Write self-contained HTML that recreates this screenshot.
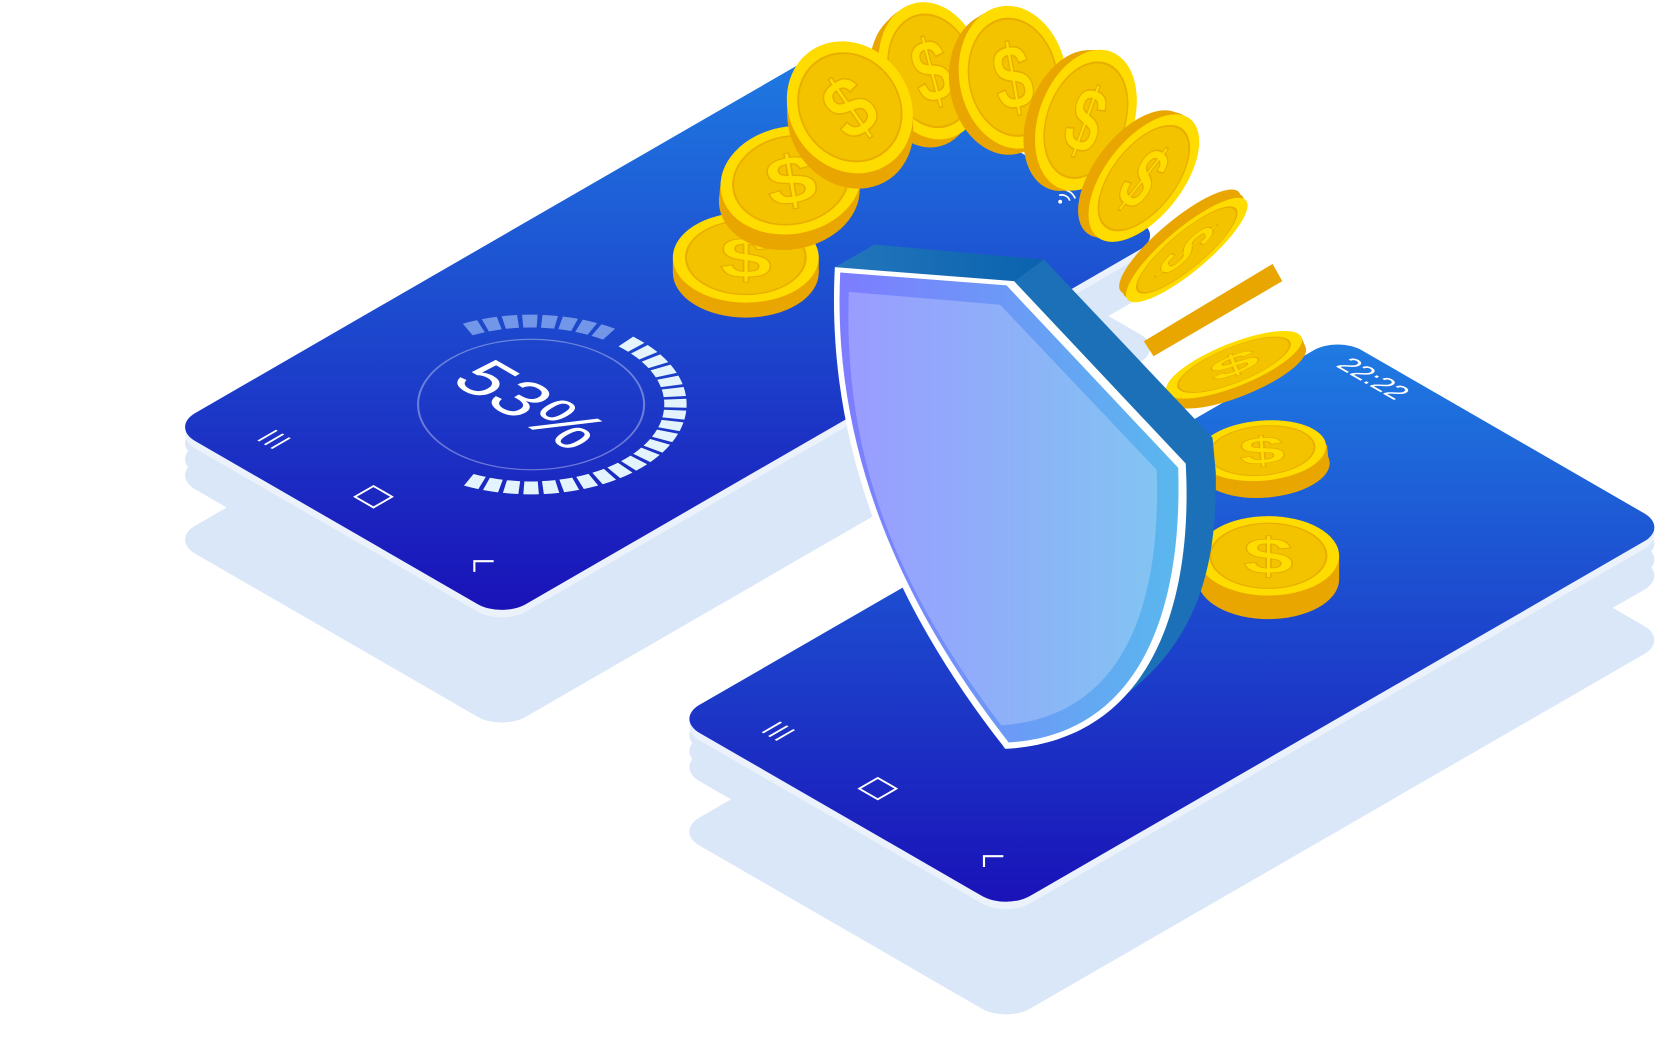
<!DOCTYPE html>
<html><head><meta charset="utf-8"><style>
html,body{margin:0;padding:0;background:#fff;width:1674px;height:1059px;overflow:hidden}
svg{display:block}
</style></head><body>
<svg width="1674" height="1059" viewBox="0 0 1560 987" xmlns="http://www.w3.org/2000/svg" font-family="Liberation Sans, sans-serif">
<defs>
<rect id="pr" x="-12" y="-701" width="356" height="713" rx="26"/>
<linearGradient id="scr" gradientUnits="userSpaceOnUse" x1="-350" y1="-350" x2="172" y2="172">
<stop offset="0" stop-color="#1f7be2"/><stop offset="1" stop-color="#1a12b8"/>
</linearGradient>
<linearGradient id="shf" x1="0" y1="0" x2="1" y2="0">
<stop offset="0" stop-color="#7d7cff"/><stop offset="1" stop-color="#5ab8ee"/>
</linearGradient>
<linearGradient id="shi" x1="0" y1="0" x2="1" y2="0">
<stop offset="0" stop-color="#9a9cff"/><stop offset="1" stop-color="#82c4f2"/>
</linearGradient>
<linearGradient id="sht" x1="0" y1="0" x2="1" y2="0">
<stop offset="0" stop-color="#2376bb"/><stop offset="1" stop-color="#0a62ae"/>
</linearGradient>
<g id="coinface">
<circle r="50" fill="#ffdc00"/>
<circle r="41" fill="#f4c300" stroke="#e8ae00" stroke-width="1.5"/>
<text x="0" y="22" font-size="64" font-weight="bold" text-anchor="middle" fill="#ffdc00" stroke="#e8ae00" stroke-width="1.2">$</text>
</g>
</defs>

<!-- LEFT PHONE -->
<g fill="#d9e7f8">
<use href="#pr" transform="translate(0,105) matrix(0.866,0.5,-0.866,0.5,180,398)"/>
<use href="#pr" transform="translate(0,15) matrix(0.866,0.5,-0.866,0.5,180,398)"/>
<use href="#pr" transform="translate(0,30) matrix(0.866,0.5,-0.866,0.5,180,398)"/>
<use href="#pr" transform="translate(0,45) matrix(0.866,0.5,-0.866,0.5,180,398)"/>
</g>
<use href="#pr" fill="#ebf2fc" transform="translate(0,7) matrix(0.866,0.5,-0.866,0.5,180,398)"/>
<g transform="matrix(0.866,0.5,-0.866,0.5,180,398)">
<use href="#pr" fill="url(#scr)"/>
<circle cx="160.8" cy="-202.8" r="86" fill="none" stroke="#ffffff" stroke-opacity="0.35" stroke-width="1.6"/>
<path d="M153.1,-312.5 A110,110 0 0 1 196.6,-98.8" fill="none" stroke="#e4f4fe" stroke-width="17" stroke-dasharray="11,3.5"/>
<path d="M56.8,-238.6 A110,110 0 0 1 139.8,-310.8" fill="none" stroke="#8fb0f0" stroke-opacity="0.75" stroke-width="17" stroke-dasharray="11,3.5"/>
<text x="160.8" y="-180" font-size="66" text-anchor="middle" fill="#fff">53%</text>
<g stroke="#fff" stroke-width="2" fill="none">
<line x1="48" y1="-22" x2="48" y2="-42"/><line x1="55" y1="-22" x2="55" y2="-42"/><line x1="62" y1="-22" x2="62" y2="-42"/>
<rect x="152" y="-42" width="20" height="20"/>
</g>
</g>
<path d="M442,533 V523 H460" stroke="#fff" stroke-width="2" fill="none"/>

<!-- RIGHT PHONE -->
<g fill="#d9e7f8">
<use href="#pr" transform="translate(0,105) matrix(0.866,0.5,-0.866,0.5,650,670)"/>
<use href="#pr" transform="translate(0,15) matrix(0.866,0.5,-0.866,0.5,650,670)"/>
<use href="#pr" transform="translate(0,30) matrix(0.866,0.5,-0.866,0.5,650,670)"/>
<use href="#pr" transform="translate(0,45) matrix(0.866,0.5,-0.866,0.5,650,670)"/>
</g>
<use href="#pr" fill="#ebf2fc" transform="translate(0,7) matrix(0.866,0.5,-0.866,0.5,650,670)"/>
<g transform="matrix(0.866,0.5,-0.866,0.5,650,670)">
<use href="#pr" fill="url(#scr)"/>
<text x="14" y="-672" font-size="26" fill="#fff">22:22</text>
<g stroke="#fff" stroke-width="2" fill="none">
<line x1="48" y1="-22" x2="48" y2="-42"/><line x1="55" y1="-22" x2="55" y2="-42"/><line x1="62" y1="-22" x2="62" y2="-42"/>
<rect x="152" y="-42" width="20" height="20"/>
</g>
</g>
<path d="M917,808 V798 H935" stroke="#fff" stroke-width="2" fill="none"/>

<!-- wifi -->
<g fill="none" stroke="#fff" stroke-width="1.6">
<path d="M987,182 a8,8 0 0 1 10,5"/><path d="M987,177 a13,13 0 0 1 15,8"/>
</g>
<circle cx="988" cy="188" r="1.8" fill="#fff"/>

<!-- COINS -->
<!-- coin 1 -->
<g transform="translate(695,240)">
<ellipse cx="0" cy="14" rx="68" ry="42" fill="#e9a600"/>
<rect x="-68" y="0" width="136" height="14" fill="#e9a600"/>
<g transform="scale(1.36,0.84)"><use href="#coinface"/></g>
</g>
<!-- coin 2 -->
<g transform="translate(737,168) rotate(-10)">
<ellipse cx="-4" cy="14" rx="66" ry="50" fill="#e9a600"/>
<ellipse cx="-2" cy="7" rx="66" ry="50" fill="#e9a600"/>
<g transform="scale(1.32,1.0)"><use href="#coinface"/></g>
</g>
<!-- coin 4 -->
<g transform="translate(868,66) rotate(-15)">
<ellipse cx="-10" cy="5" rx="48" ry="65" fill="#e9a600"/>
<ellipse cx="-5" cy="2" rx="48" ry="65" fill="#e9a600"/>
<g transform="scale(0.96,1.3)"><use href="#coinface"/></g>
</g>
<!-- coin 3 -->
<g transform="translate(792,100) rotate(-35)">
<ellipse cx="-8" cy="12" rx="56" ry="64" fill="#e9a600"/>
<ellipse cx="-4" cy="6" rx="56" ry="64" fill="#e9a600"/>
<g transform="scale(1.12,1.28)"><use href="#coinface"/></g>
</g>
<!-- coin 5 -->
<g transform="translate(944,72) rotate(-10)">
<ellipse cx="-10" cy="4" rx="50" ry="67" fill="#e9a600"/>
<ellipse cx="-5" cy="2" rx="50" ry="67" fill="#e9a600"/>
<g transform="scale(1.0,1.34)"><use href="#coinface"/></g>
</g>
<!-- coin 6 -->
<g transform="translate(1012,112) rotate(20)">
<ellipse cx="-10" cy="4" rx="44" ry="68" fill="#e9a600"/>
<ellipse cx="-5" cy="2" rx="44" ry="68" fill="#e9a600"/>
<g transform="scale(0.88,1.36)"><use href="#coinface"/></g>
</g>
<!-- coin 7 -->
<g transform="translate(1066,166) rotate(38)">
<ellipse cx="-10" cy="3" rx="36" ry="70" fill="#e9a600"/>
<ellipse cx="-5" cy="1" rx="36" ry="70" fill="#e9a600"/>
<g transform="scale(0.72,1.4)"><use href="#coinface"/></g>
</g>
<!-- coin 8 -->
<g transform="translate(1106,233) rotate(50)">
<ellipse cx="-10" cy="0" rx="20" ry="72" fill="#e9a600"/>
<ellipse cx="-5" cy="0" rx="20" ry="72" fill="#e9a600"/>
<g transform="scale(0.4,1.44)"><use href="#coinface"/></g>
</g>
<!-- bar -->
<polygon points="1066,318 1186,246 1195,262 1075,332" fill="#e9a600"/>
<!-- coin 10 -->
<g transform="translate(1150,340) rotate(-22)">
<ellipse cx="0" cy="10" rx="68" ry="20" fill="#e9a600"/>
<rect x="-68" y="0" width="136" height="10" fill="#e9a600"/>
<g transform="scale(1.36,0.4)"><use href="#coinface"/></g>
</g>
<!-- coin 11 -->
<g transform="translate(1176,420) rotate(-5)">
<ellipse cx="2" cy="16" rx="60" ry="28" fill="#e9a600"/>
<rect x="-59" y="0" width="120" height="16" fill="#e9a600"/>
<g transform="scale(1.2,0.56)"><use href="#coinface"/></g>
</g>
<!-- coin 12 -->
<g transform="translate(1182,518)">
<ellipse cx="0" cy="22" rx="66" ry="37" fill="#e9a600"/>
<rect x="-66" y="0" width="132" height="22" fill="#e9a600"/>
<g transform="scale(1.32,0.74)"><use href="#coinface"/></g>
</g>

<!-- SHIELD -->
<polygon points="778,249 815,228 973,242 945,262" fill="url(#sht)"/>
<path d="M945,262 L973,242 L1130,408 L1133,440 C1135,540 1110,620 1010,672 L935,698 Z" fill="#1b70b8"/>
<path d="M778,249 L945,262 L1105,432 C1112,560 1075,690 937,698 C820,550 770,400 778,249 Z" fill="#fff"/>
<path d="M783,254 L938,266 L1098,436 C1102,560 1068,684 940,692 C826,546 776,400 783,254 Z" fill="url(#shf)"/>
<path d="M791,272 L932,284 L1078,438 C1082,560 1050,668 933,676 C830,540 786,420 791,272 Z" fill="url(#shi)"/>
</svg>
</body></html>
